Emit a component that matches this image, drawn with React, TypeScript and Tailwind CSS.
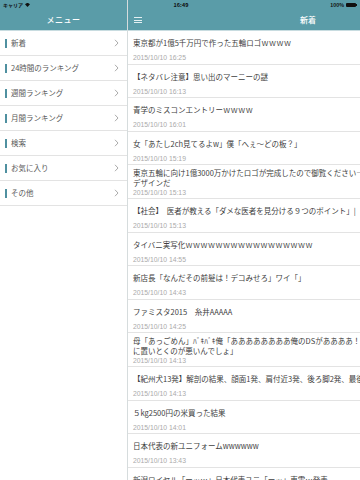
import React from "react";

const JP = '"Noto Sans CJK JP", "Noto Sans", sans-serif';

const menu = ["新着", "24時間のランキング", "週間ランキング", "月間ランキング", "検索", "お気に入り", "その他"];

const items: { lines: string[]; date: string }[] = [
  { lines: ["東京都が1億5千万円で作った五輪ロゴｗｗｗｗ"], date: "2015/10/10 16:25" },
  { lines: ["【ネタバレ注意】思い出のマーニーの謎"], date: "2015/10/10 16:13" },
  { lines: ["青学のミスコンエントリーｗｗｗｗ"], date: "2015/10/10 16:01" },
  { lines: ["女「あたし2ch見てるよw」僕「へぇ～どの板？」"], date: "2015/10/10 15:19" },
  { lines: ["東京五輪に向け1億3000万かけたロゴが完成したので御覧ください―ロゴ", "デザインだ"], date: "2015/10/10 15:13" },
  { lines: ["【社会】　医者が教える「ダメな医者を見分ける９つのポイント」|"], date: "2015/10/10 15:13" },
  { lines: ["タイバニ実写化ｗｗｗｗｗｗｗｗｗｗｗｗｗｗｗｗｗ"], date: "2015/10/10 14:55" },
  { lines: ["新店長「なんだその前髪は！デコみせろ」ワイ「」"], date: "2015/10/10 14:43" },
  { lines: ["ファミスタ2015　糸井AAAAA"], date: "2015/10/10 14:25" },
  { lines: ["母「あっごめん」ﾊﾞｷﾊﾞｷ俺「ああああああああ俺のDSがああああ！！お前が床", "に置いとくのが悪いんでしょ」"], date: "2015/10/10 14:13" },
  { lines: ["【紀州犬13発】解剖の結果、顔面1発、肩付近3発、後ろ脚2発、最後に心臓"], date: "2015/10/10 14:13" },
  { lines: ["５kg2500円の米買った結果"], date: "2015/10/10 14:01" },
  { lines: ["日本代表の新ユニフォームwwwwww"], date: "2015/10/10 13:43" },
  { lines: ["新潟ロイヤル「ーッ…」日本代表ユニ「ーッ」東電…発表"], date: "2015/10/10 13:30" },
];

function Chevron() {
  return (
    <svg width="5" height="8" viewBox="0 0 5 8" className="shrink-0">
      <path d="M1 0.8 L4 4 L1 7.2" fill="none" stroke="#a0a0a0" strokeWidth="0.9" />
    </svg>
  );
}

export default function App() {
  return (
    <div className="relative w-[360px] h-[480px] overflow-hidden bg-white flex" style={{ fontFamily: JP }}>
      {/* status bar overlay */}
      <div className="absolute left-0 top-0 w-[360px] h-[10px] flex items-center px-[3px] text-[5px] font-bold text-[#111] z-10">
        <div className="flex items-center gap-[2px] w-[100px]">
          <span>キャリア</span>
          <svg width="5" height="4" viewBox="0 0 10 8">
            <path d="M5 8 L0 2.5 A7 7 0 0 1 10 2.5 Z" fill="#111" />
          </svg>
        </div>
        <div className="flex-1 text-center text-[5.5px] pl-[2px]">16:49</div>
        <div className="w-[100px] flex items-center justify-end gap-[2px]">
          <span>100%</span>
          <div className="flex items-center">
            <div className="w-[10px] h-[4px] bg-[#111] rounded-[1px]" />
            <div className="w-[1px] h-[2px] bg-[#111]" />
          </div>
        </div>
      </div>

      {/* left menu */}
      <div className="w-[128px] shrink-0 flex flex-col border-r border-[#d6dcdd] h-full">
        <div className="h-[31px] shrink-0 pt-[10px] bg-[#5a9ca8] border-b border-[#c8dce0] flex items-center justify-center">
          <span className="text-white text-[8px] font-medium tracking-[0.5px]">メニュー</span>
        </div>
        {menu.map((m) => (
          <div key={m} className="h-[25px] shrink-0 border-b border-[#e3e3e3] flex items-center pl-[5px] pr-[8px]">
            <div className="w-[2px] h-[9px] bg-[#4f90a0] mr-[4px]" />
            <span className="flex-1 text-[7.5px] text-[#595959] leading-none">{m}</span>
            <Chevron />
          </div>
        ))}
      </div>

      {/* right list */}
      <div className="w-[360px] shrink-0 flex flex-col h-full">
        <div className="h-[31px] shrink-0 pt-[10px] bg-[#5a9ca8] border-b border-[#c8dce0] flex items-center px-[6px]">
          <div className="flex flex-col gap-[1.5px] w-[8px]">
            <div className="h-[1px] bg-[#e4f0f2]" />
            <div className="h-[1px] bg-[#e4f0f2]" />
            <div className="h-[1px] bg-[#e4f0f2]" />
          </div>
          <div className="flex-1 text-center text-white text-[8px] font-medium pr-[8px]">新着</div>
        </div>
        {items.map((it, i) => {
          const single = it.lines.length === 1;
          return (
            <div
              key={i}
              className={
                single
                  ? "h-[33.5px] shrink-0 border-b border-[#e3e3e3] pl-[5px] pt-[7px] flex flex-col"
                  : "h-[34px] shrink-0 border-b border-[#e3e3e3] pl-[5px] pt-[3px] flex flex-col"
              }
            >
              {it.lines.map((l, j) => (
                <div key={j} className="text-[7.5px] leading-[10px] text-[#404040] whitespace-nowrap">
                  {l}
                </div>
              ))}
              <div
                className={
                  single
                    ? "mt-[5px] text-[6.8px] leading-[10px] text-[#aaaaaa]"
                    : "mt-0 text-[6.8px] leading-[10px] text-[#aaaaaa]"
                }
                style={{ fontFamily: '"Liberation Sans", Arial, sans-serif' }}
              >
                {it.date}
              </div>
            </div>
          );
        })}
      </div>
    </div>
  );
}
